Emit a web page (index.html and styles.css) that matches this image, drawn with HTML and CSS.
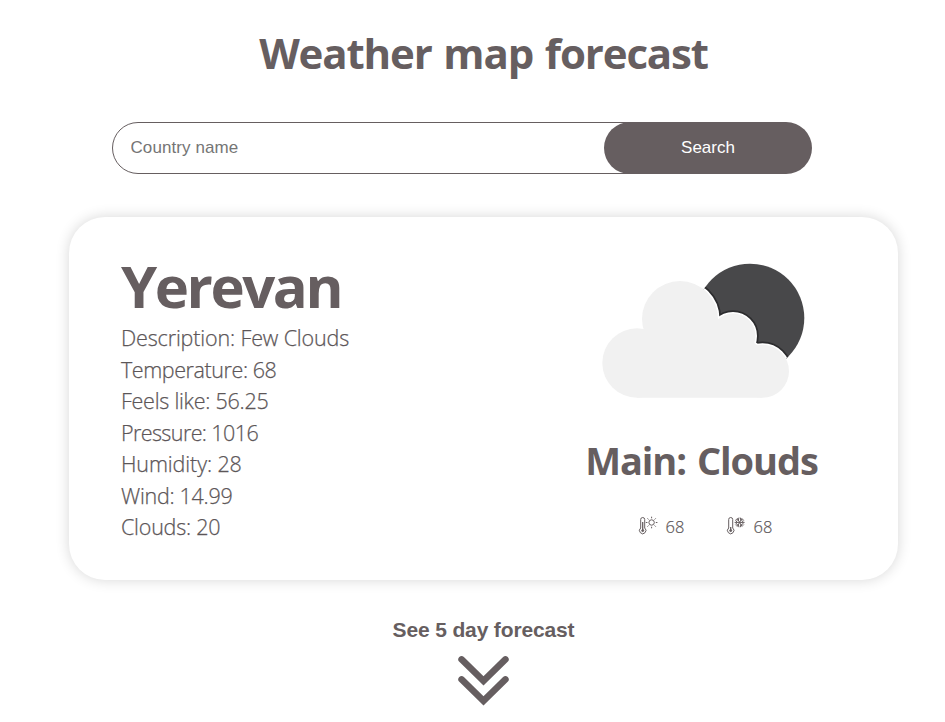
FILE: index.html
```html
<!DOCTYPE html>
<html lang="en">
<head>
<meta charset="utf-8">
<title>Weather map forecast</title>
<link rel="stylesheet" href="styles.css">
</head>
<body>
<main class="page">
  <h1 class="title">Weather map forecast</h1>
  <form class="search">
    <input class="search-input" type="text" placeholder="Country name">
    <button class="search-button" type="button">Search</button>
  </form>
  <section class="card">
    <div class="details">
      <h2 class="city">Yerevan</h2>
      <ul class="facts">
        <li class="description">Description: Few Clouds</li>
        <li class="temperature">Temperature: 68</li>
        <li class="feels">Feels like: 56.25</li>
        <li class="pressure">Pressure: 1016</li>
        <li class="humidity">Humidity: 28</li>
        <li class="wind">Wind: 14.99</li>
        <li class="clouds">Clouds: 20</li>
      </ul>
    </div>
    <div class="summary">
      <svg class="cloud" viewBox="0 0 230 160" width="230" height="160">
        <defs>
          <clipPath id="moon"><circle cx="160" cy="68" r="54.3"/></clipPath>
          <g id="shape">
            <circle cx="90" cy="69" r="38"/>
            <circle cx="47" cy="113" r="34.7"/>
            <circle cx="143" cy="86" r="22.5"/>
            <circle cx="172.5" cy="121.2" r="26.5"/>
            <path d="M47 80H150L172 100V147.7H47Z"/>
          </g>
        </defs>
        <g clip-path="url(#moon)">
          <rect class="moon" width="230" height="160"/>
          <use href="#shape" class="edge-dark"/>
          <use href="#shape" class="edge-light"/>
        </g>
        <use href="#shape" class="cloud-fill"/>
      </svg>
      <h3 class="main">Main: Clouds</h3>
      <div class="range">
        <span class="temp">
          <svg class="thermo" viewBox="0 0 20 20" width="20" height="20">
            <path d="M2.7 12V3.5a2 2 0 0 1 4 0V12a3.2 3.2 0 1 1-4 0Z"/>
            <path class="mercury" d="M4.7 6v9"/><circle class="bulb" cx="4.7" cy="14.6" r="1"/>
            <circle cx="13.6" cy="6.5" r="2.7"/>
            <path d="M13.6.7v1.6M13.6 10.7v1.6M7.8 6.5h1.6M17.8 6.5h1.6M9.5 2.4l1.1 1.1M16.6 9.5l1.1 1.1M9.5 10.6l1.1-1.1M16.6 3.5l1.1-1.1"/>
          </svg>68
        </span>
        <span class="temp">
          <svg class="thermo" viewBox="0 0 20 20" width="20" height="20">
            <path d="M2.7 12V3.5a2 2 0 0 1 4 0V12a3.2 3.2 0 1 1-4 0Z"/>
            <path class="mercury" d="M4.7 11v4"/><circle class="bulb" cx="4.7" cy="14.6" r="1"/>
            <path d="M8.6 6.4h10M11.1 2.1l5 8.6M16.1 2.1l-5 8.6"/>
            <path d="M9.4 4.4l2 2-2 2M17.8 4.4l-2 2 2 2M12.9 1.6l-.5 2.6-2.6-.6M14.3 1.6l.5 2.6 2.6-.6M12.9 11.2l-.5-2.6-2.6.6M14.3 11.2l.5-2.6 2.6.6"/>
          </svg>68
        </span>
      </div>
    </div>
  </section>
  <div class="more">
    <p class="more-text">See 5 day forecast</p>
    <svg class="chevrons" viewBox="0 0 54 54" width="54" height="54">
      <path d="M4.6 5.4 26.5 26.8 48.4 5.4M4.6 25.4 26.5 46.8 48.4 25.4"/>
    </svg>
  </div>
</main>
</body>
</html>
```
FILE: styles.css
```css
* { box-sizing: border-box; margin: 0; padding: 0; }
body { background: #fff; color: #665e60; font-family: "Open Sans", "Noto Sans", sans-serif; overflow: hidden; }
.page { height: 722px; padding-left: 69px; display: flex; flex-direction: column; align-items: flex-start; }
.title { width: 829px; margin-top: 23px; height: 60px; line-height: 60px; text-align: center; font-size: 42px; font-weight: 700; letter-spacing: -1.15px; word-spacing: 2px; white-space: nowrap; }
.search { display: flex; width: 700px; height: 52px; margin: 39px 0 0 43px; }
.search-input { width: 544px; flex: none; border: 1px solid #665e60; border-radius: 26px; padding: 0 17.5px; font: 17px "Liberation Sans", sans-serif; letter-spacing: .08px; background: #fff; }
.search-input::placeholder { color: #757575; opacity: 1; }
.search-button { width: 208px; flex: none; margin-left: -52px; position: relative; border: 0; border-radius: 26px; background: #665e60; color: #fff; font: 17px "Liberation Sans", sans-serif; }
.card { display: flex; width: 829px; height: 363px; margin-top: 43px; border-radius: 36px; background: #fff; box-shadow: 0 0 14px rgba(0,0,0,.16); }
.details { width: 452px; padding: 33px 0 0 52px; }
.city { height: 72px; line-height: 72px; font-size: 58px; font-weight: 700; letter-spacing: -2.45px; white-space: nowrap; }
.facts { list-style: none; font-size: 21.5px; font-weight: 300; color: #5c5658; -webkit-text-stroke: .25px #5c5658; }
.facts li { height: 31.5px; line-height: 31.5px; white-space: nowrap; }
.description { letter-spacing: -.14px; }
.temperature { letter-spacing: -.42px; }
.feels { letter-spacing: -.25px; }
.pressure { letter-spacing: -.6px; }
.humidity { letter-spacing: -.1px; }
.wind { letter-spacing: -.27px; }
.clouds { letter-spacing: -.22px; }
.summary { width: 361px; display: flex; flex-direction: column; align-items: center; padding-top: 33px; }
.cloud { margin-left: 7px; flex: none; }
.moon { fill: #48484a; }
.edge-dark { fill: #2c2c2e; stroke: #2c2c2e; stroke-width: 6.5; }
.edge-light { fill: #fff; stroke: #fff; stroke-width: 3; }
.cloud-fill { fill: #f1f1f1; }
.main { height: 52px; line-height: 52px; margin-top: 24px; font-size: 38px; font-weight: 700; letter-spacing: -1.05px; word-spacing: 2px; white-space: nowrap; }
.range { display: flex; gap: 41px; margin-top: 28px; padding-left: 7px; }
.temp { display: flex; align-items: center; gap: 8px; width: 47px; height: 24px; font-size: 16.5px; font-weight: 300; color: #5c5658; -webkit-text-stroke: .2px #5c5658; }
.thermo { flex: none; fill: none; stroke: #665e60; stroke-width: 1; }
.mercury { stroke-width: 1.3; }
.bulb { fill: #665e60; }
.more { width: 829px; display: flex; flex-direction: column; align-items: center; margin-top: 38px; }
.more-text { font: bold 21px/24px "Liberation Sans", sans-serif; letter-spacing: -.14px; }
.chevrons { margin-top: 12px; fill: none; stroke: #665e60; stroke-width: 6.6; stroke-linecap: round; stroke-linejoin: miter; }
```
